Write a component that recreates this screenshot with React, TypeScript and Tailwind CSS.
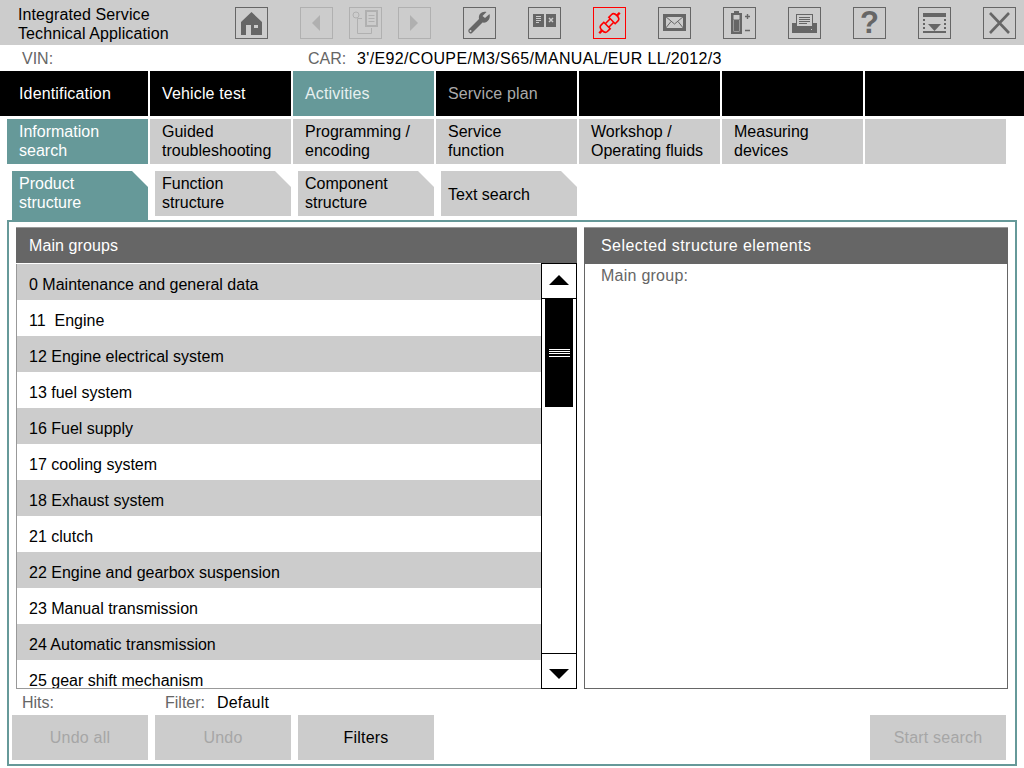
import type { ReactNode } from 'react';

const groups = [
  '0 Maintenance and general data',
  '11  Engine',
  '12 Engine electrical system',
  '13 fuel system',
  '16 Fuel supply',
  '17 cooling system',
  '18 Exhaust system',
  '21 clutch',
  '22 Engine and gearbox suspension',
  '23 Manual transmission',
  '24 Automatic transmission',
  '25 gear shift mechanism',
];

function ToolButton({ children, state = 'on', className = '' }: { children: ReactNode; state?: 'on' | 'off' | 'alert'; className?: string }) {
  const border = state === 'on' ? 'border-[#666666]' : state === 'off' ? 'border-[#b0b0b0]' : 'border-[#ff0000]';
  return (
    <button className={`flex h-[32px] w-[33px] shrink-0 items-center justify-center border ${border} ${className}`}>
      {children}
    </button>
  );
}

function Icon({ children, color = '#666666' }: { children: ReactNode; color?: string }) {
  return (
    <svg width="31" height="30" viewBox="0 0 31 30" fill={color} stroke="none" className="block">
      {children}
    </svg>
  );
}

function Toolbar() {
  return (
    <div className="ml-[66px] flex items-center">
      <ToolButton>
        <Icon>
          <path d="M15.5 4 L26 14 V27 H15 V17 H10 V27 H5 V14 Z" />
          <rect x="18" y="17" width="4" height="3" fill="#cccccc" />
        </Icon>
      </ToolButton>
      <ToolButton state="off" className="ml-[32px]">
        <Icon color="#b0b0b0"><path d="M19 7 V23 L11 15 Z" /></Icon>
      </ToolButton>
      <ToolButton state="off" className="ml-[16px]">
        <Icon color="#b0b0b0">
          <g fill="none" stroke="#b0b0b0">
            <circle cx="6" cy="7" r="3" />
            <path d="M12 10.5 H7.5 V25.5 H21.5 V20" />
            <rect x="16" y="3" width="11" height="15" strokeWidth="2" />
            <path d="M18.5 7.5 H24.5 M18.5 10.5 H24.5 M18.5 13.5 H24.5" />
          </g>
        </Icon>
      </ToolButton>
      <ToolButton state="off" className="ml-[16px]">
        <Icon color="#b0b0b0"><path d="M11 7 V23 L19 15 Z" /></Icon>
      </ToolButton>
      <ToolButton className="ml-[32px]">
        <Icon>
          <path d="M25.5 6 L21 10 L18.5 8 L22.5 4 C18 3 14 6 15 11 L5 21 C3 23 6 27 8 25 L18.5 14.5 C23 15.5 27 11 25.5 6 Z" />
          <circle cx="6.5" cy="23" r="1" fill="#cccccc" />
        </Icon>
      </ToolButton>
      <ToolButton className="ml-[32px]">
        <Icon>
          <rect x="4" y="6" width="11" height="13" />
          <path d="M7 8.5 H12 M7 10.5 H12 M7 12.5 H12 M7 14.5 H10" stroke="#cccccc" strokeWidth="1" />
          <rect x="17" y="6" width="10" height="13" />
          <path d="M20 10 L24 14 M24 10 L20 14" stroke="#cccccc" strokeWidth="1.5" />
        </Icon>
      </ToolButton>
      <ToolButton state="alert" className="ml-[32px]">
        <Icon color="#ff0000">
          <g transform="rotate(-45 15.5 15)" fill="none" stroke="#ff0000" strokeWidth="1.6">
            <path d="M19 10.5 H23 C25 10.5 26 12 26 15 C26 18 25 19.5 23 19.5 H19 Z" />
            <path d="M12 10.5 H8 C6 10.5 5 12 5 15 C5 18 6 19.5 8 19.5 H12 Z" />
            <path d="M12 12.5 H19 M12 17.5 H19" />
            <path d="M26 15 H30 M1 15 H5" strokeWidth="2.4" />
          </g>
        </Icon>
      </ToolButton>
      <ToolButton className="ml-[32px]">
        <Icon>
          <rect x="5.5" y="7.5" width="20" height="14" fill="none" stroke="#666666" strokeWidth="3" />
          <path d="M6 8 L15.5 16 L25 8 M6 21 L12 13.5 M25 21 L19 13.5" fill="none" stroke="#666666" strokeWidth="1" />
        </Icon>
      </ToolButton>
      <ToolButton className="ml-[32px]">
        <Icon>
          <rect x="10" y="3" width="5" height="2" />
          <path d="M7 5 H18 V26 H7 Z M9.5 7 V11 H15.5 V7 Z" fillRule="evenodd" />
          <rect x="9.5" y="11.5" width="6" height="12" fill="#cccccc" />
          <rect x="10" y="12" width="5" height="11" />
          <path d="M21 8.5 H26 M23.5 6 V11 M21 22.5 H26" stroke="#666666" strokeWidth="1.4" />
        </Icon>
      </ToolButton>
      <ToolButton className="ml-[32px]">
        <Icon>
          <path d="M7 6 H24 V18 H7 Z M8 7 V18 H23 V7 Z" fillRule="evenodd" />
          <path d="M10 9.5 H21 M10 11.5 H21 M10 13.5 H21 M10 15.5 H18" stroke="#666666" strokeWidth="1" />
          <path d="M3 15 H7 V18 H24 V15 H28 V25 H3 Z" />
          <rect x="22" y="21" width="1" height="1" fill="#cccccc" />
        </Icon>
      </ToolButton>
      <ToolButton className="ml-[32px]">
        <span className="text-[31px] font-bold leading-none text-[#666666] [font-family:'Liberation_Sans',Arial,sans-serif]">?</span>
      </ToolButton>
      <ToolButton className="ml-[32px]">
        <Icon>
          <rect x="4" y="5" width="23" height="4" />
          <path d="M9 16 H22 L15.5 23 Z" />
          <rect x="4" y="23" width="23" height="2" />
          <path d="M5 11 V22 M26 11 V22" stroke="#666666" strokeWidth="2" strokeDasharray="2 2" />
        </Icon>
      </ToolButton>
      <ToolButton className="ml-[32px]">
        <Icon><path d="M6 5 L25 25 M25 5 L6 25" stroke="#666666" strokeWidth="2.6" fill="none" /></Icon>
      </ToolButton>
    </div>
  );
}

function NavCell({ label, tone = 'plain', className = '' }: { label?: string; tone?: 'plain' | 'active' | 'muted'; className?: string }) {
  const colors = tone === 'active' ? 'bg-[#669999] text-[#e6f0f0]' : tone === 'muted' ? 'bg-black text-[#aaaaaa]' : 'bg-black text-white';
  return (
    <div className={`flex h-[45px] items-center pl-[12px] pt-[1px] tracking-[0.15px] ${colors} ${className}`}>
      {label}
    </div>
  );
}

function SubCell({ lines, active, className = '' }: { lines?: string[]; active?: boolean; className?: string }) {
  return (
    <div className={`flex h-[45px] w-[141px] flex-col justify-center pb-[2px] pl-[12px] leading-[19px] ${active ? 'bg-[#669999] text-white' : 'bg-[#cccccc] text-black'} ${className}`}>
      {lines?.map(l => <span key={l}>{l}</span>)}
    </div>
  );
}

function Tab({ lines, active }: { lines: string[]; active?: boolean }) {
  const inactive = lines.length > 1 ? 'pb-[2px]' : 'pt-[1px]';
  return (
    <div className={`flex w-[136px] flex-col pl-[7px] leading-[19px] [clip-path:polygon(0_0,120px_0,100%_16px,100%_100%,0_100%)] ${active ? 'relative z-10 h-[51px] bg-[#669999] pt-[3px] text-white' : `h-[45px] justify-center bg-[#cccccc] text-black ${inactive}`}`}>
      {lines.map(l => <span key={l}>{l}</span>)}
    </div>
  );
}

function ActionButton({ label, enabled, className = '' }: { label: string; enabled?: boolean; className?: string }) {
  return (
    <button className={`h-[45px] w-[136px] bg-[#cccccc] pt-[1px] tracking-[0.2px] ${enabled ? 'text-black' : 'text-[#a6a6a6]'} ${className}`}>
      {label}
    </button>
  );
}

export default function App() {
  return (
    <div className="h-[768px] w-[1024px] overflow-hidden bg-white text-[16px] [font-family:'Liberation_Sans',Arial,sans-serif]">
      <div className="flex h-[45px] items-center bg-[#cccccc] pl-[18px]">
        <div className="w-[151px] whitespace-nowrap pt-[2px] leading-[19px] tracking-[0.1px] text-black">
          <div>Integrated Service</div>
          <div>Technical Application</div>
        </div>
        <Toolbar />
      </div>

      <div className="flex h-[26px] items-center pl-[22px] pt-[1px]">
        <span className="w-[286px] text-[#666666]">VIN:</span>
        <span className="w-[49px] text-[#666666]">CAR:</span>
        <span className="text-black tracking-[0.35px]">3'/E92/COUPE/M3/S65/MANUAL/EUR LL/2012/3</span>
      </div>

      <div className="flex gap-[2px]">
        <NavCell label="Identification" className="w-[148px] pl-[19px]" />
        <NavCell label="Vehicle test" className="w-[141px]" />
        <NavCell label="Activities" tone="active" className="w-[141px]" />
        <NavCell label="Service plan" tone="muted" className="w-[141px]" />
        <NavCell className="w-[141px]" />
        <NavCell className="w-[141px]" />
        <NavCell className="flex-1" />
      </div>

      <div className="mt-[3px] flex gap-[2px] pl-[7px]">
        <SubCell lines={['Information', 'search']} active />
        <SubCell lines={['Guided', 'troubleshooting']} />
        <SubCell lines={['Programming /', 'encoding']} />
        <SubCell lines={['Service', 'function']} />
        <SubCell lines={['Workshop /', 'Operating fluids']} />
        <SubCell lines={['Measuring', 'devices']} />
        <SubCell />
      </div>

      <div className="mt-[7px] flex h-[45px] items-start gap-[7px] pl-[12px]">
        <Tab lines={['Product', 'structure']} active />
        <Tab lines={['Function', 'structure']} />
        <Tab lines={['Component', 'structure']} />
        <Tab lines={['Text search']} />
      </div>

      <div className="ml-[7px] mt-[4px] flex h-[546px] w-[1010px] flex-col border-2 border-[#669999] pl-[7px] pt-[5px]">
        <div className="flex gap-[7px]">
          <div className="w-[561px]">
            <div className="flex h-[37px] items-center border-t border-b border-t-[#999999] border-b-white bg-[#666666] pl-[13px] tracking-[0.1px] text-white">Main groups</div>
            <div className="flex h-[425px] border-b border-l border-[#999999]">
              <div className="flex-1 overflow-hidden">
                {groups.map((g, i) => (
                  <div key={g} className={`flex h-[36px] items-center whitespace-pre pl-[12px] pt-[5px] text-black ${i % 2 === 0 ? 'bg-[#cccccc]' : 'bg-white'}`}>
                    {g}
                  </div>
                ))}
              </div>
              <div className="-mt-px flex h-[426px] w-[36px] flex-col border border-black bg-white">
                <div className="flex h-[35px] items-center justify-center border-b border-black pb-[3px]">
                  <svg width="20" height="10" viewBox="0 0 20 10"><path d="M10 0 L20 10 H0 Z" fill="#000000" /></svg>
                </div>
                <div className="flex-1 px-[3px]">
                  <div className="flex h-[108px] items-center justify-center bg-black">
                    <div className="h-[8px] w-[21px] border-y border-white bg-[linear-gradient(#000_0_1px,#fff_1px_2px,#000_2px_3px,#fff_3px_4px,#000_4px)]" />
                  </div>
                </div>
                <div className="flex h-[35px] items-center justify-center border-t border-black pt-[5px]">
                  <svg width="20" height="10" viewBox="0 0 20 10"><path d="M0 0 H20 L10 10 Z" fill="#000000" /></svg>
                </div>
              </div>
            </div>
          </div>
          <div className="w-[424px]">
            <div className="flex h-[37px] items-center border-t border-[#999999] bg-[#666666] pl-[17px] tracking-[0.45px] text-white">Selected structure elements</div>
            <div className="h-[425px] border border-t-0 border-[#666666] pl-[16px] tracking-[0.25px] text-[#666666]">Main group:</div>
          </div>
        </div>

        <div className="flex h-[26px] items-center pl-[6px] pt-[1px]">
          <span className="w-[143px] text-[#666666]">Hits:</span>
          <span className="w-[52px] text-[#666666]">Filter:</span>
          <span className="text-black tracking-[0.2px]">Default</span>
        </div>

        <div className="ml-[-4px] flex gap-[7px]">
          <ActionButton label="Undo all" />
          <ActionButton label="Undo" />
          <ActionButton label="Filters" enabled />
          <ActionButton label="Start search" className="ml-auto mr-[9px]" />
        </div>
      </div>
    </div>
  );
}
